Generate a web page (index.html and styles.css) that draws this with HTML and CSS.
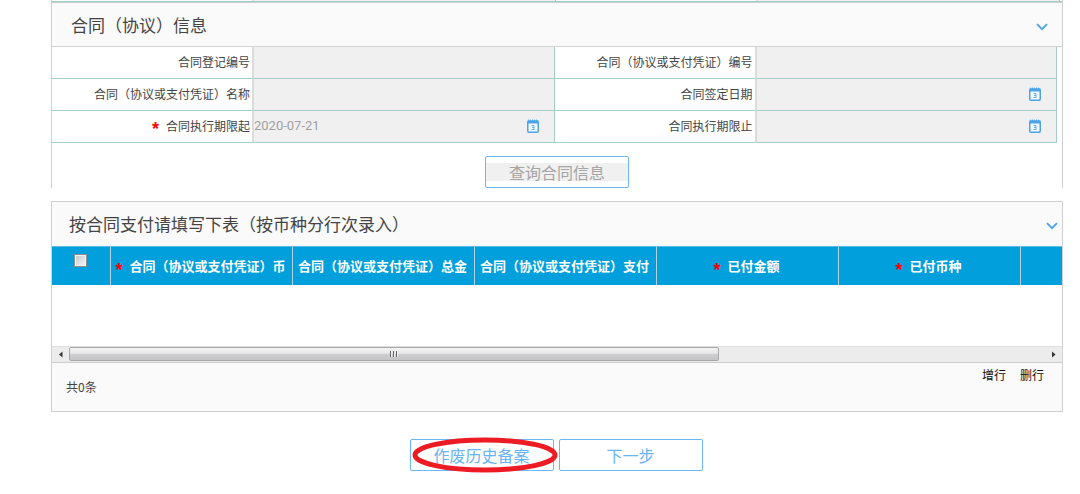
FILE: index.html
```html
<!DOCTYPE html>
<html lang="zh-CN">
<head>
<meta charset="utf-8">
<title>合同（协议）信息</title>
<link rel="stylesheet" href="styles.css">
</head>
<body>
<svg class="defs" aria-hidden="true">
  <symbol id="calendar" viewBox="0 0 12 14">
    <path d="M1.5 0.5v2M3.5 0.5v2M5.5 0.5v2M7.5 0.5v2M9.5 0.5v2" stroke="#6bb4ee" stroke-width="1"/>
    <rect x="0.75" y="2.25" width="10.5" height="11" rx="1.2" fill="#f4f9fd" stroke="#4ba3ea" stroke-width="1.5"/>
    <path d="M0.5 1.5h11v3h-11z" fill="#4ba3ea"/>
    <path d="M4.5 6.5h2.5v4h-2.5M5 8.5h2" fill="none" stroke="#65b1ee" stroke-width="1"/>
  </symbol>
  <symbol id="chevron" viewBox="0 0 12 8">
    <path d="M1 1.2l5 5 5-5" fill="none" stroke="#4ba3ea" stroke-width="1.8"/>
  </symbol>
</svg>
<main class="page">
  <section class="panel contract">
    <div class="fields previous" aria-hidden="true"><span></span><span class="cell"></span><span></span><span class="cell"></span></div>
    <header class="panel-head">
      <h2>合同（协议）信息</h2>
      <button class="toggle inset" type="button" aria-label="收起"><svg><use href="#chevron"/></svg></button>
    </header>
    <div class="fields current">
      <label for="reg">合同登记编号</label>
      <div class="cell"><input id="reg" readonly></div>
      <label for="no">合同（协议或支付凭证）编号</label>
      <div class="cell"><input id="no" readonly></div>
      <label for="name">合同（协议或支付凭证）名称</label>
      <div class="cell"><input id="name" readonly></div>
      <label for="sign">合同签定日期</label>
      <div class="cell"><input id="sign" readonly><button class="pick" type="button" aria-label="选择日期"><svg><use href="#calendar"/></svg></button></div>
      <label for="from"><span class="star">*</span>合同执行期限起</label>
      <div class="cell"><input id="from" value="2020-07-21" readonly><button class="pick" type="button" aria-label="选择日期"><svg><use href="#calendar"/></svg></button></div>
      <label for="to">合同执行期限止</label>
      <div class="cell"><input id="to" readonly><button class="pick" type="button" aria-label="选择日期"><svg><use href="#calendar"/></svg></button></div>
    </div>
    <div class="query"><button class="btn muted" type="button"><span>查询合同信息</span></button></div>
  </section>

  <section class="panel payments">
    <header class="panel-head">
      <h2>按合同支付请填写下表（按币种分行次录入）</h2>
      <button class="toggle" type="button" aria-label="收起"><svg><use href="#chevron"/></svg></button>
    </header>
    <div class="table-view">
      <table>
        <colgroup><col class="col-check"><col><col><col><col><col><col></colgroup>
        <thead>
          <tr>
            <th class="check"><input type="checkbox" aria-label="全选"></th>
            <th><span class="star">*</span>合同（协议或支付凭证）币</th>
            <th>合同（协议或支付凭证）总金</th>
            <th>合同（协议或支付凭证）支付</th>
            <th><span class="star">*</span>已付金额</th>
            <th><span class="star">*</span>已付币种</th>
            <th></th>
          </tr>
        </thead>
        <tbody><tr><td colspan="7"></td></tr></tbody>
      </table>
    </div>
    <div class="scrollbar">
      <button type="button" aria-label="向左"><svg viewBox="0 0 5 7"><path d="M4.5 0.5v6L1 3.5z" fill="#333"/></svg></button>
      <div class="track"><div class="thumb"><i></i><i></i><i></i></div></div>
      <button type="button" aria-label="向右"><svg viewBox="0 0 5 7"><path d="M1 0.5v6l3.5-3z" fill="#333"/></svg></button>
    </div>
    <footer class="panel-foot">
      <span>共0条</span>
      <div class="row-actions"><button type="button">增行</button><button type="button">删行</button></div>
    </footer>
  </section>

  <div class="actions">
    <div class="marked">
      <button class="btn" type="button">作废历史备案</button>
      <svg class="ring" viewBox="0 0 146 36" aria-hidden="true"><ellipse cx="73" cy="18" rx="70" ry="15" fill="none" stroke="#ed1c24" stroke-width="5"/></svg>
    </div>
    <button class="btn" type="button">下一步</button>
  </div>
</main>
</body>
</html>
```

FILE: styles.css
```css
* { box-sizing: border-box; }

body {
  margin: 0;
  background: #fff;
  color: #444;
  font: 12px/16px "Noto Sans CJK SC", sans-serif;
}

button, input {
  margin: 0;
  padding: 0;
  border: 0;
  background: none;
  color: inherit;
  font: inherit;
}

svg { display: block; }
.defs { position: absolute; width: 0; height: 0; }

.page { padding: 0 17px 0 51px; }

.panel {
  border: 1px solid #d0d0d0;
}
.contract {
  border-top: 0;
  border-bottom: 0;
}

.panel-head {
  display: flex;
  align-items: center;
  justify-content: space-between;
  height: 44px;
  padding: 0 4px 0 17px;
  background: #fafafa;
}
.contract .panel-head {
  height: 45px;
  padding-left: 19px;
  border-top: 1px solid #c8cfcd;
  border-bottom: 1px solid #d2d2d2;
}
.panel-head h2 {
  margin: 0;
  color: #444;
  font-size: 17px;
  line-height: 24px;
  font-weight: 400;
}
.toggle { padding-top: 4px; }
.toggle.inset { margin-right: 10px; }
.toggle svg { width: 12px; height: 8px; }

.fields {
  display: grid;
  grid-template-columns: 200px 1fr 200px 1fr;
  padding-right: 5px;
}
.current { grid-template-rows: 32px 32px 32px; }
.previous {
  grid-template-rows: 1px;
  padding-right: 2px;
  border-bottom: 1px solid #a4cec6;
}
.fields label {
  display: flex;
  align-items: center;
  justify-content: flex-end;
  padding: 0 2px 2px 0;
  border-bottom: 1px solid #a4cec6;
  white-space: nowrap;
}
.cell {
  display: flex;
  align-items: center;
  min-width: 0;
  padding-bottom: 2px;
  background: #f0f0f0;
  border-left: 2px solid #dcdcdc;
  border-right: 1px solid #a4cec6;
  border-bottom: 1px solid #a4cec6;
}
.previous .cell {
  padding: 0;
  border-bottom: 0;
}
.cell input {
  flex: 1;
  min-width: 0;
  height: 100%;
  color: #a0a0a0;
  font-family: Roboto, sans-serif;
  font-size: 13px;
  outline: 0;
}
.pick { margin-right: 15px; }
.pick svg { width: 12px; height: 14px; }

.star {
  margin-right: 7px;
  color: #f00;
  font: bold 18px/12px "Liberation Sans", sans-serif;
  vertical-align: -5px;
}
label .star { padding-top: 7px; }

.query {
  display: flex;
  justify-content: center;
  padding-top: 13px;
}

.btn {
  display: flex;
  align-items: center;
  justify-content: center;
  width: 144px;
  height: 32px;
  border: 1px solid #6db6f4;
  border-radius: 2px;
  background: #fff;
  color: #69b3f0;
  font-size: 16px;
  line-height: 18px;
}
.muted { color: #a5a5a5; }
.muted span {
  flex: 1;
  background: #f0f0f0;
}

.payments { margin-top: 13px; }

.table-view { overflow: hidden; }
table {
  width: 1151px;
  table-layout: fixed;
  border-collapse: separate;
  border-spacing: 0;
}
col { width: 182px; }
.col-check { width: 59px; }
th {
  height: 39px;
  padding: 0 2px 0 0;
  overflow: hidden;
  background: #019fdc;
  border-top: 1px solid #5bbce3;
  border-right: 1px solid #b4d3df;
  color: #fff;
  font-size: 13px;
  line-height: 18px;
  white-space: nowrap;
}
th.check { vertical-align: top; }
.check input {
  appearance: none;
  display: block;
  width: 13px;
  height: 13px;
  margin: 7px auto 0 22px;
  border: 1px solid #8b8f91;
  background: linear-gradient(135deg, #c4c8cc, #f5f5f5);
  box-shadow: inset 0 0 0 1px #f4f4f4;
}
td { height: 61px; padding: 0; }

.scrollbar {
  display: flex;
  height: 16px;
  background: #ececec;
  border-top: 1px solid #e0e0e0;
}
.scrollbar button {
  display: grid;
  place-items: center;
  width: 17px;
}
.scrollbar svg { width: 5px; height: 7px; }
.track { flex: 1; }
.thumb {
  display: flex;
  align-items: center;
  justify-content: center;
  gap: 1px;
  width: 66.6%;
  height: 14px;
  border: 1px solid #a8a8a8;
  border-radius: 2px;
  background: linear-gradient(#f4f4f4, #e6e6e7 45%, #cfcfd1 50%, #c4c4c6);
}
.thumb i {
  width: 2px;
  height: 6px;
  background: #666;
  border-right: 1px solid #eee;
}

.panel-foot {
  display: flex;
  justify-content: space-between;
  height: 49px;
  padding: 4px 18px 0 14px;
  border-top: 1px solid #ccc;
  background: #fafafa;
}
.panel-foot > span { padding-top: 12px; }
.row-actions {
  display: flex;
  align-items: flex-start;
  gap: 14px;
  color: #111;
}

.actions {
  display: flex;
  justify-content: center;
  gap: 5px;
  padding: 27px 2px 22px 0;
}
.marked { position: relative; }
.ring {
  position: absolute;
  top: -2px;
  left: 2px;
  width: 146px;
  height: 36px;
  pointer-events: none;
}
```
